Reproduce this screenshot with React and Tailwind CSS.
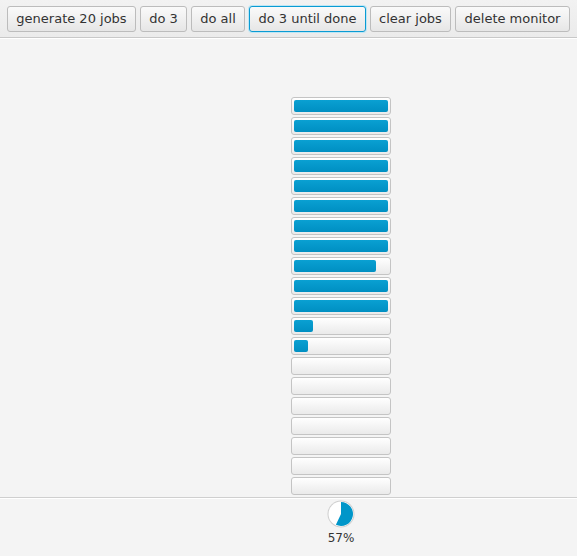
import React from "react";

const fills = [100, 100, 100, 100, 100, 100, 100, 100, 87, 100, 100, 20, 15, 0, 0, 0, 0, 0, 0, 0];

function Btn({ children, w, focused }) {
  return (
    <div
      className={
        "h-[26px] flex items-center justify-center rounded-[3px] text-[13px] text-[#333333] bg-gradient-to-b from-[#fafafa] to-[#e6e6e6] " +
        (focused
          ? "border border-[#0a9bd3] shadow-[0_0_0_1px_#bde6f5]"
          : "border border-[#bcbcbc]")
      }
      style={{ width: w }}
    >
      {children}
    </div>
  );
}

function Bar({ pct }) {
  return (
    <div className="w-[100px] h-[18px] rounded-[3px] border border-[#c4c4c4] bg-gradient-to-b from-[#ffffff] to-[#eaeaea] p-[2px]">
      {pct > 0 && (
        <div
          className="h-[12px] rounded-[2px] bg-gradient-to-b from-[#0aa0d2] to-[#008fc2]"
          style={{ width: `${(pct * 94) / 100}px` }}
        />
      )}
    </div>
  );
}

function Pie({ pct }) {
  const r = 12;
  const a = (pct / 100) * 2 * Math.PI;
  const x = 14 + r * Math.sin(a);
  const y = 14 - r * Math.cos(a);
  const large = pct > 50 ? 1 : 0;
  return (
    <svg width="28" height="28" viewBox="0 0 28 28">
      <circle cx="14" cy="14" r="13.5" fill="#cfcfcf" />
      <circle cx="14" cy="14" r="12.5" fill="#ffffff" />
      <path d={`M14 14 L14 ${14 - r} A${r} ${r} 0 ${large} 1 ${x} ${y} Z`} fill="#0096c9" />
    </svg>
  );
}

export default function App() {
  return (
    <div
      className="w-[577px] h-[556px] flex flex-col bg-[#f4f4f4] overflow-hidden"
      style={{ fontFamily: '"DejaVu Sans", sans-serif' }}
    >
      <div className="h-[38px] flex items-start gap-[4px] pl-[7px] pt-[6px] bg-gradient-to-b from-[#f2f2f2] to-[#ebebeb] border-b border-[#c8c8c8]">
        <Btn w={129}>generate 20 jobs</Btn>
        <Btn w={47}>do 3</Btn>
        <Btn w={54}>do all</Btn>
        <Btn w={117} focused>do 3 until done</Btn>
        <Btn w={81}>clear jobs</Btn>
        <Btn w={115}>delete monitor</Btn>
      </div>
      <div className="flex-1 flex flex-col items-center justify-end gap-[2px] pb-[2px] pl-[105px] border-t border-white">
        {fills.map((p, i) => (
          <Bar key={i} pct={p} />
        ))}
      </div>
      <div className="h-[59px] border-t border-[#cfcfcf]">
        <div className="h-full border-t border-white flex flex-col items-center pl-[105px]">
          <div className="mt-[1px]">
            <Pie pct={57} />
          </div>
          <div className="text-[12px] leading-[14px] text-[#333333] mt-[3px]">57%</div>
        </div>
      </div>
    </div>
  );
}
